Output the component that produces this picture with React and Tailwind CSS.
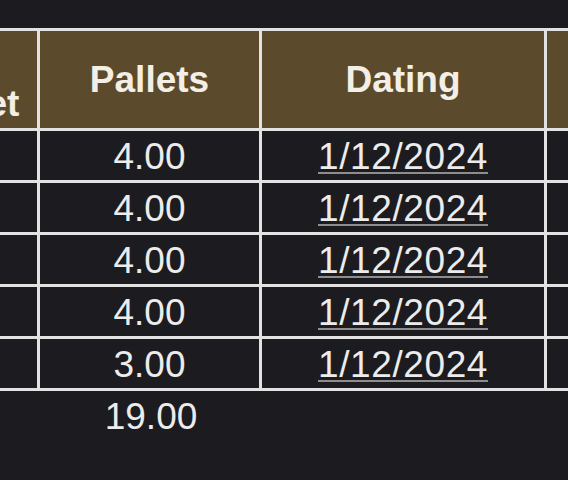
export default function App() {
  const rows = ["4.00", "4.00", "4.00", "4.00", "3.00"];
  return (
    <div className="w-[568px] h-[480px] overflow-hidden bg-[#1c1b1f] pt-[28px] font-['Liberation_Sans',Arial,sans-serif] text-[#ececec]">
      <div className="ml-[-97px] w-[800px]">
        {/* header */}
        <div className="flex h-[103px] border-y-[3px] border-[#e2e2e2] bg-[#5b4b2c] font-bold text-[37px] text-[#f3efe6]">
          <div className="w-[137px] shrink-0 border-r-[3px] border-[#e2e2e2] flex flex-col items-center justify-end pb-[4px] leading-[40px]">
            <span>Per</span>
            <span>Pallet</span>
          </div>
          <div className="w-[222px] shrink-0 border-r-[3px] border-[#e2e2e2] flex items-center justify-center">
            Pallets
          </div>
          <div className="w-[285px] shrink-0 border-r-[3px] border-[#e2e2e2] flex items-center justify-center">
            Dating
          </div>
          <div className="flex-1" />
        </div>
        {rows.map((v, i) => (
          <div key={i} className="flex h-[52px] border-b-[3px] border-[#e2e2e2] text-[37px]">
            <div className="w-[137px] shrink-0 border-r-[3px] border-[#e2e2e2]" />
            <div className="w-[222px] shrink-0 border-r-[3px] border-[#e2e2e2] flex items-center justify-center pt-[3px]">
              {v}
            </div>
            <div className="w-[285px] shrink-0 border-r-[3px] border-[#e2e2e2] flex items-center justify-center pt-[3px]">
              <span className="underline decoration-[#8d8d8d] decoration-[2px] underline-offset-[3px] tracking-[0.6px]">1/12/2024</span>
            </div>
            <div className="flex-1" />
          </div>
        ))}
        <div className="flex h-[52px] text-[37px]">
          <div className="w-[137px] shrink-0" />
          <div className="w-[222px] shrink-0 flex items-center justify-center">19.00</div>
        </div>
      </div>
    </div>
  );
}
